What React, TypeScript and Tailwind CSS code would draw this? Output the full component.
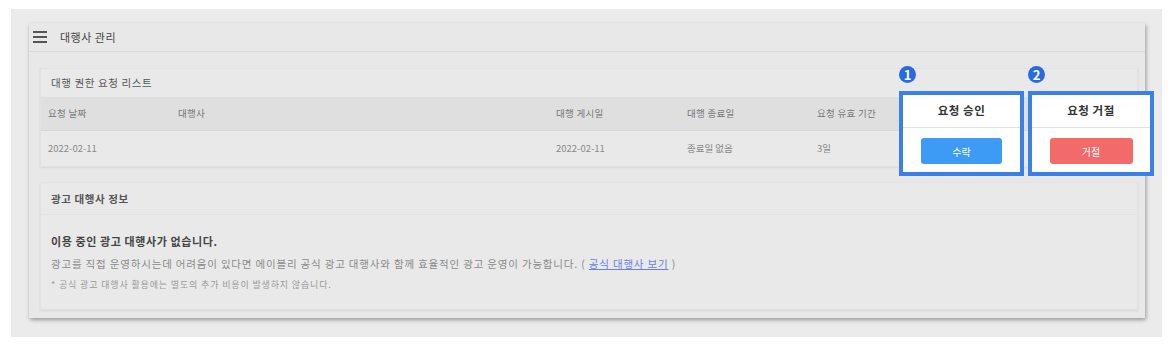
import React from "react"

const font = { fontFamily: '"Noto Sans CJK KR", "Noto Sans", sans-serif' }

function ActionBox({ num, title, label, tone }: { num: string; title: string; label: string; tone: "blue" | "red" }) {
  return (
    <div className="flex flex-col">
      <div className="flex h-[17px] w-[17px] items-center justify-center rounded-full bg-[#2a6ae0] text-[13px] font-bold leading-none text-white">
        {num}
      </div>
      <div className="mt-[8px] h-[85px] border-[4px] border-[#3b7fe8] bg-white">
        <div className="flex h-[33px] items-center justify-center border-b border-[#e2e2e2] text-[11.5px] font-semibold tracking-[0.5px] text-[#333]">
          {title}
        </div>
        <div className="flex justify-center pt-[10px]">
          <button
            className={
              tone === "blue"
                ? "h-[26px] w-[81px] rounded-[3px] bg-[#3d9bf5] text-[10px] text-white"
                : "h-[26px] w-[83px] rounded-[3px] bg-[#f26a6a] text-[10px] text-white"
            }
          >
            {label}
          </button>
        </div>
      </div>
    </div>
  )
}

export default function App() {
  return (
    <div className="h-[346px] w-[1174px] bg-white pl-[11px] pt-[9px]" style={font}>
      <div className="relative h-[328px] w-[1151px] bg-[#ebebeb] pl-[18px] pt-[14px]">
        {/* main card */}
        <div className="h-[295px] w-[1116px] bg-[#e8e8e8] shadow-[1px_2px_4px_rgba(0,0,0,0.35)]">
          <div className="flex h-[29px] items-center border-b border-[#d9d9d9] pl-[4px]">
            <div className="flex w-[14px] flex-col gap-[3px]">
              <span className="h-[2px] bg-[#555]" />
              <span className="h-[2px] bg-[#555]" />
              <span className="h-[2px] bg-[#555]" />
            </div>
            <span className="ml-[13px] text-[11px] tracking-[0.5px] text-[#444]">대행사 관리</span>
          </div>

          <div className="flex flex-col gap-[15px] pl-[11px] pr-[7px] pt-[16px]">
            {/* request list */}
            <div className="h-[99px] border border-[#e2e2e2] bg-[#e9e9e9] shadow-[0_1px_2px_rgba(0,0,0,0.08)]">
              <div className="flex h-[28px] items-center pl-[10px] text-[10.5px] tracking-[0.6px] text-[#555]">대행 권한 요청 리스트</div>
              <div className="flex h-[33px] items-center bg-[#dfdfdf] text-[9.5px] tracking-[0.3px] text-[#777]">
                <span className="w-[137px] pl-[7px]">요청 날짜</span>
                <span className="w-[378px]">대행사</span>
                <span className="w-[131px]">대행 게시일</span>
                <span className="w-[130px]">대행 종료일</span>
                <span>요청 유효 기간</span>
              </div>
              <div className="flex h-[35px] items-center border-t border-[#d6d6d6] text-[9.5px] text-[#888]">
                <span className="w-[137px] pl-[7px]">2022-02-11</span>
                <span className="w-[378px]" />
                <span className="w-[131px]">2022-02-11</span>
                <span className="w-[130px]">종료일 없음</span>
                <span>3일</span>
              </div>
            </div>

            {/* agency info */}
            <div className="h-[128px] border border-[#e2e2e2] bg-[#e9e9e9] shadow-[0_1px_2px_rgba(0,0,0,0.08)]">
              <div className="flex h-[32px] items-center border-b border-[#e2e2e2] pl-[10px] text-[10.5px] font-semibold tracking-[0.6px] text-[#555]">
                광고 대행사 정보
              </div>
              <div className="pl-[10px] pt-[18px]">
                <p className="text-[11px] font-bold tracking-[0.6px] text-[#444]">이용 중인 광고 대행사가 없습니다.</p>
                <p className="mt-[6px] text-[10.5px] tracking-[0.82px] text-[#8a8a8a]">
                  광고를 직접 운영하시는데 어려움이 있다면 에이블리 공식 광고 대행사와 함께 효율적인 광고 운영이 가능합니다. ({" "}
                  <span className="text-[#6b7fe0] underline">공식 대행사 보기</span> )
                </p>
                <p className="mt-[7px] text-[9px] tracking-[0.85px] text-[#999]">* 공식 광고 대행사 활용에는 별도의 추가 비용이 발생하지 않습니다.</p>
              </div>
            </div>
          </div>
        </div>

        {/* highlighted columns */}
        <div className="absolute left-[888px] top-[57px] flex w-[257px] gap-[4px]">
          <div className="w-[125px]">
            <ActionBox num="1" title="요청 승인" label="수락" tone="blue" />
          </div>
          <div className="w-[126px]">
            <ActionBox num="2" title="요청 거절" label="거절" tone="red" />
          </div>
        </div>
      </div>
    </div>
  )
}
